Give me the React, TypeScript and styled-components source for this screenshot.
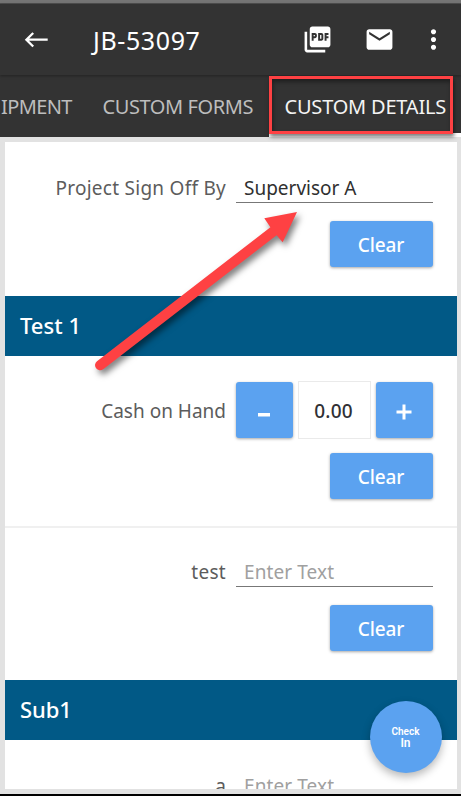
import React from 'react';
import styled, { createGlobalStyle } from 'styled-components';
import { MdEmail, MdMoreVert, MdPictureAsPdf } from 'react-icons/md';

const GlobalStyle = createGlobalStyle`
  * { box-sizing: border-box; }
  html, body { margin: 0; padding: 0; }
  body { font-family: "Noto Sans", sans-serif; overflow: hidden; }
`;

const Screen = styled.div`
  position: relative;
  display: flex;
  flex-direction: column;
  width: 461px;
  height: 796px;
  overflow: hidden;
  background: #e2e2e2;
  border-bottom: 2px solid #000;
`;

const StatusStrip = styled.div`
  flex: none;
  height: 4px;
  background: #757575;
  border-bottom: 1px solid #505050;
`;

const Header = styled.header`
  position: relative;
  z-index: 1;
  flex: none;
  display: flex;
  align-items: center;
  height: 71px;
  padding: 0 12px 0 24px;
  background: #333333;
  box-shadow: 0 1px 3px rgba(0, 0, 0, 0.35);
`;

const BackIcon = styled.svg`
  flex: none;
  width: 25px;
  height: 18px;
`;

const Title = styled.h1`
  flex: 1;
  margin: 0 0 0 44px;
  color: #fff;
  font-size: 25px;
  font-weight: 400;
  line-height: 34px;
  letter-spacing: 0.6px;
  white-space: nowrap;
`;

const Actions = styled.div`
  display: flex;
  gap: 31px;
  color: #fff;
  svg { display: block; width: 31px; height: 31px; }
  svg:last-child { margin-left: -8px; }
`;

const Tabs = styled.nav`
  flex: none;
  display: flex;
  height: 62px;
  background: #333333;
`;

const Tab = styled.div<{ $width: number; $pad: number; $spacing: number; $active?: boolean }>`
  flex: none;
  width: ${p => p.$width}px;
  height: 62px;
  padding: 18px 0 0 ${p => p.$pad}px;
  color: ${p => (p.$active ? '#f4f4f4' : '#bdbdbd')};
  border-bottom: ${p => (p.$active ? '4px solid #fff' : 'none')};
  font-size: 20px;
  line-height: 27px;
  letter-spacing: ${p => p.$spacing}px;
  white-space: nowrap;
`;

const Card = styled.main`
  flex: none;
  width: 452px;
  height: 647px;
  margin: 5px 0 0 5px;
  overflow: hidden;
  background: #fff;
`;

const Field = styled.section<{ $height: number; $top: number; $divider?: boolean }>`
  display: flex;
  flex-direction: column;
  height: ${p => p.$height}px;
  padding: ${p => p.$top}px 24px 0 0;
  border-bottom: ${p => (p.$divider ? '2px solid #f0f0f0' : 'none')};
`;

const FieldRow = styled.div`
  display: flex;
  align-items: center;
  justify-content: flex-end;
`;

const Label = styled.label<{ $spacing: number }>`
  margin: 2px 10px 0 0;
  color: #5c5c5c;
  font-size: 19px;
  line-height: 26px;
  letter-spacing: ${p => p.$spacing}px;
  white-space: nowrap;
`;

const Input = styled.div<{ $filled?: boolean; $spacing: number }>`
  width: 197px;
  height: 32px;
  padding: 4px 0 0 8px;
  color: ${p => (p.$filled ? '#303030' : '#a0a0a0')};
  border-bottom: 1px solid #777;
  font-size: 19px;
  line-height: 26px;
  letter-spacing: ${p => p.$spacing}px;
  white-space: nowrap;
`;

const Button = styled.button`
  padding: 0;
  color: #fff;
  background: #5ba2f0;
  border: 0;
  border-radius: 3px;
  box-shadow: 0 1px 3px rgba(0, 0, 0, 0.35);
  font-family: inherit;
  font-size: 19px;
  font-weight: 500;
`;

const ClearButton = styled(Button)<{ $gap: number }>`
  align-self: flex-end;
  flex: none;
  width: 103px;
  height: 46px;
  margin-top: ${p => p.$gap}px;
  padding: 2px 1px 0 0;
  letter-spacing: -0.1px;
`;

const StepButton = styled(Button)`
  display: flex;
  align-items: center;
  justify-content: center;
  width: 57px;
  height: 56px;
`;

const StepIcon = styled.svg`
  width: 16px;
  height: 16px;
  margin: 3px 1px 0 0;
`;

const Quantity = styled.div`
  width: 73px;
  height: 58px;
  margin: 0 5px;
  padding-right: 2px;
  border: 1px solid #eaeaea;
  color: #303035;
  font-size: 19px;
  font-weight: 500;
  line-height: 58px;
  letter-spacing: 0.2px;
  text-align: center;
`;

const SectionTitle = styled.h2<{ $spacing: number }>`
  height: 60px;
  margin: 0;
  padding-left: 15px;
  color: #fff;
  background: #015986;
  font-size: 22px;
  font-weight: 500;
  line-height: 59px;
  letter-spacing: ${p => p.$spacing}px;
`;

const CheckInButton = styled.button`
  position: absolute;
  left: 370px;
  top: 701px;
  display: flex;
  flex-direction: column;
  align-items: center;
  justify-content: center;
  width: 72px;
  height: 72px;
  padding: 2px 1px 0 0;
  color: #fff;
  background: #5ba2f0;
  border: 0;
  border-radius: 50%;
  box-shadow: 0 4px 9px rgba(0, 0, 0, 0.28);
  font-family: Roboto, sans-serif;
  font-weight: 600;
`;

const CheckInLine = styled.span<{ $size: number; $line: number }>`
  display: block;
  font-size: ${p => p.$size}px;
  line-height: ${p => p.$line}px;
`;

const TabHighlight = styled.div`
  position: absolute;
  z-index: 2;
  left: 269px;
  top: 76px;
  width: 184px;
  height: 58px;
  border: 3px solid #fe4143;
  box-shadow: 1px 3px 4px rgba(0, 0, 0, 0.5), inset 1px 3px 4px rgba(0, 0, 0, 0.4);
`;

const Pointer = styled.svg`
  position: absolute;
  left: 85px;
  top: 200px;
  width: 225px;
  height: 185px;
  overflow: visible;
  filter: drop-shadow(3px 4px 3px rgba(0, 0, 0, 0.5));
  pointer-events: none;
`;

export default function App() {
  return (
    <Screen>
      <GlobalStyle />
      <StatusStrip />
      <Header>
        <BackIcon viewBox="0 0 25 18" fill="none" stroke="#fff" strokeWidth="2.3">
          <path d="M23.7 8.7H2.5M9.2 2L2.4 8.7l6.8 6.8" />
        </BackIcon>
        <Title>JB-53097</Title>
        <Actions>
          <MdPictureAsPdf />
          <MdEmail />
          <MdMoreVert />
        </Actions>
      </Header>
      <Tabs>
        <Tab $width={87} $pad={1} $spacing={-0.6}>IPMENT</Tab>
        <Tab $width={182} $pad={15.5} $spacing={-0.4}>CUSTOM FORMS</Tab>
        <Tab $width={192} $pad={15.5} $spacing={-0.2} $active>CUSTOM DETAILS</Tab>
      </Tabs>
      <Card>
        <Field $height={154} $top={29}>
          <FieldRow>
            <Label $spacing={0.26}>Project Sign Off By</Label>
            <Input $filled $spacing={0}>Supervisor A</Input>
          </FieldRow>
          <ClearButton $gap={18}>Clear</ClearButton>
        </Field>
        <SectionTitle $spacing={0.05}>Test 1</SectionTitle>
        <Field $height={172} $top={25} $divider>
          <FieldRow>
            <Label $spacing={0}>Cash on Hand</Label>
            <StepButton>
              <StepIcon viewBox="0 0 16 16"><path d="M2 9h12v3.5H2z" fill="#fff" /></StepIcon>
            </StepButton>
            <Quantity>0.00</Quantity>
            <StepButton>
              <StepIcon viewBox="0 0 16 16"><path d="M8 .5v15M.5 8h15" stroke="#fff" strokeWidth="3" /></StepIcon>
            </StepButton>
          </FieldRow>
          <ClearButton $gap={14}>Clear</ClearButton>
        </Field>
        <Field $height={152} $top={27}>
          <FieldRow>
            <Label $spacing={0.3}>test</Label>
            <Input $spacing={0.1}>Enter Text</Input>
          </FieldRow>
          <ClearButton $gap={18}>Clear</ClearButton>
        </Field>
        <SectionTitle $spacing={-0.1}>Sub1</SectionTitle>
        <Field $height={154} $top={29}>
          <FieldRow>
            <Label $spacing={0}>a</Label>
            <Input $spacing={0.1}>Enter Text</Input>
          </FieldRow>
        </Field>
      </Card>
      <TabHighlight />
      <Pointer viewBox="85 200 225 185">
        <path
          d="M297 212L264.3 218.3L270.4 227.2L97 361.2A5 5 0 0 0 103.2 369.2L276.6 235.2L282.7 242.2Z"
          fill="#fe4143"
        />
      </Pointer>
      <CheckInButton>
        <CheckInLine $size={10} $line={10}>Check</CheckInLine>
        <CheckInLine $size={12} $line={12}>In</CheckInLine>
      </CheckInButton>
    </Screen>
  );
}
